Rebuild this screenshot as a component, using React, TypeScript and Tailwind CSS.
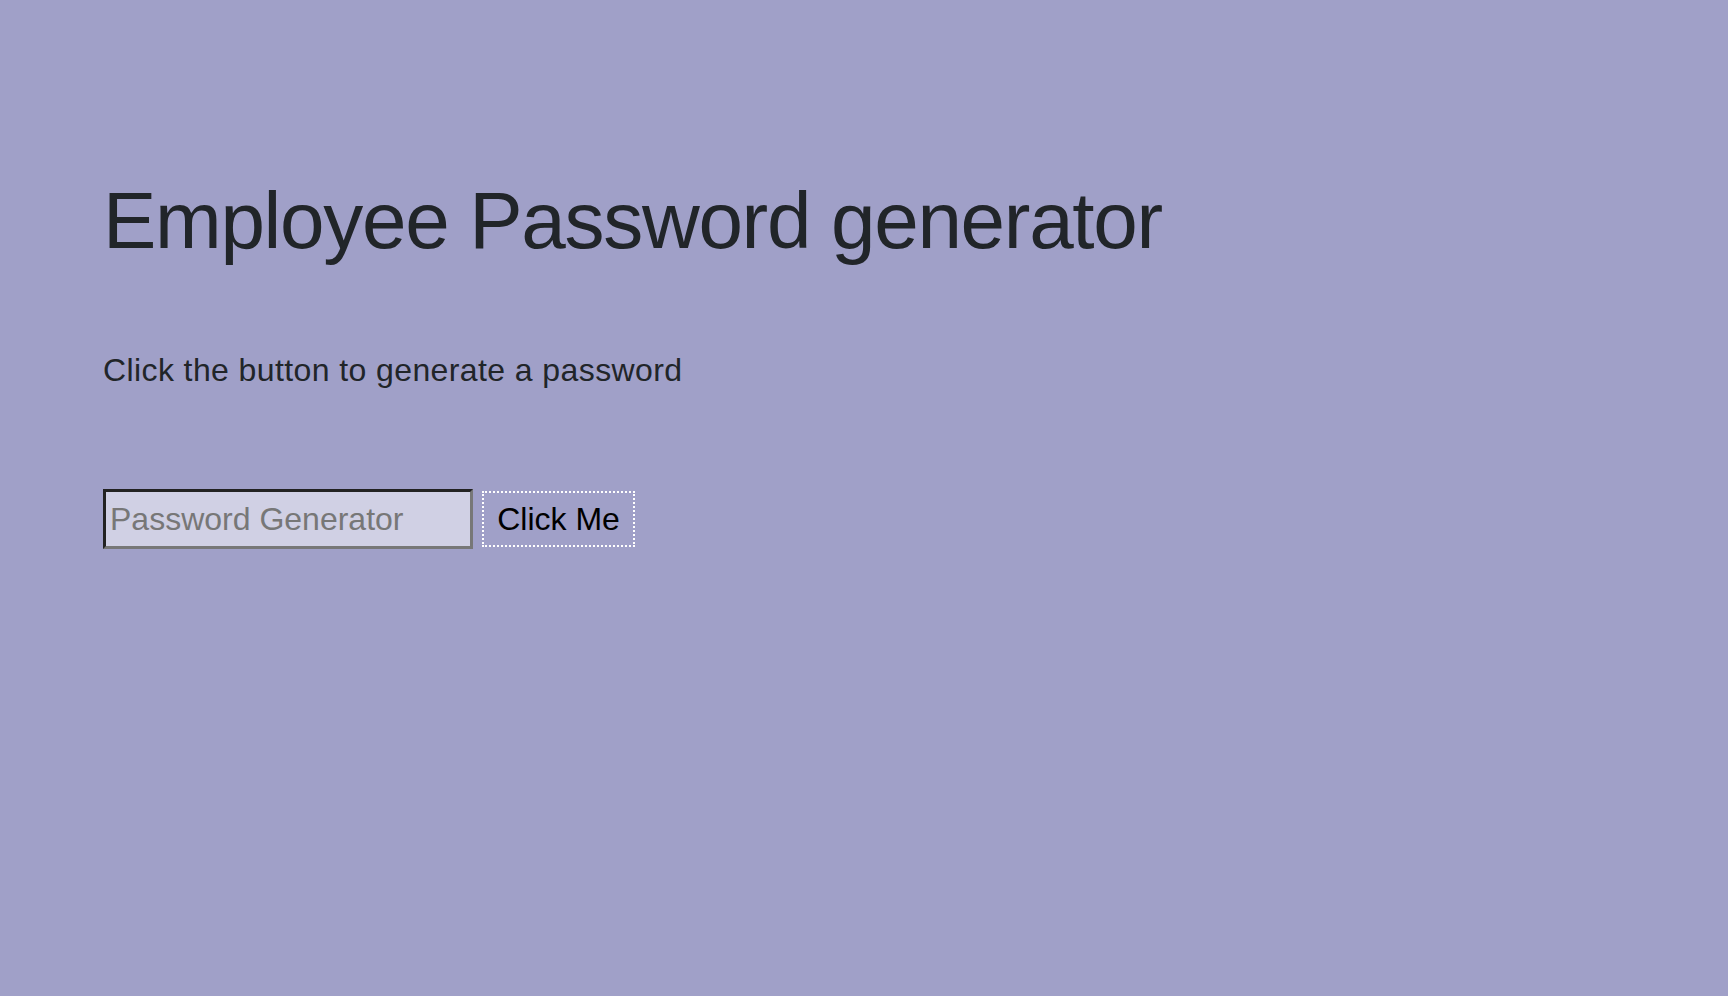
export default function App() {
  return (
    <div className="min-h-screen w-full bg-[#a0a0c8] pl-[103px] pt-[173px] font-['Liberation_Sans',Arial,sans-serif] text-[#212529]">
      <h1 className="text-[80px] leading-[96px] font-normal tracking-[-1.3px]">
        Employee Password generator
      </h1>
      <p className="mt-[77px] text-[32px] leading-[48px] tracking-[0.4px]">
        Click the button to generate a password
      </p>
      <div className="mt-[95px] flex items-center gap-[9px]">
        <input
          type="text"
          placeholder="Password Generator"
          className="h-[60px] w-[370px] border-[3px] border-t-[#222] border-l-[#222] border-b-[#777] border-r-[#777] bg-[#d0d0e4] px-[4px] text-[32px] text-black placeholder:text-[#777] outline-none"
        />
        <button className="h-[56px] w-[153px] border-2 border-dotted border-white bg-transparent text-[32px] text-black">
          Click Me
        </button>
      </div>
    </div>
  );
}
